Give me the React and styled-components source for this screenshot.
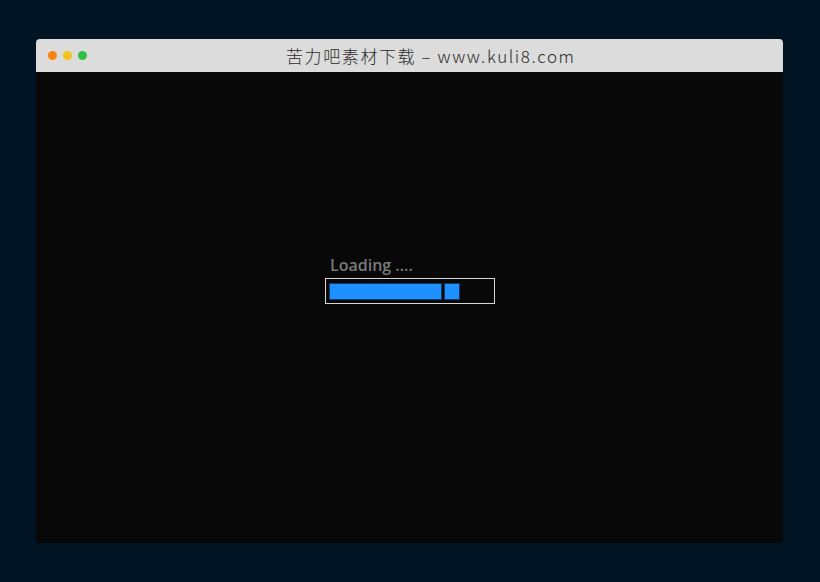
import React from 'react';
import styled, { createGlobalStyle } from 'styled-components';

const GlobalStyle = createGlobalStyle`
    html, body {
        margin: 0;
        padding: 0;
        background: #011424;
        font-family: "Open Sans", "Noto Sans CJK SC", sans-serif;
    }
`;

function App() {
    return (
        <>
            <GlobalStyle />
            <Page>
                <Window>
                    <TitleBar>
                        <Dots>
                            <Dot color="#f6820f" />
                            <Dot color="#f0c419" />
                            <Dot color="#2fc043" />
                        </Dots>
                        <Title>苦力吧素材下载 – www.kuli8.com</Title>
                    </TitleBar>
                    <Content>
                        <Loader>
                            <LoadingText>Loading ....</LoadingText>
                            <Track>
                                <Bar width={113} />
                                <Bar width={16} />
                            </Track>
                        </Loader>
                    </Content>
                </Window>
            </Page>
        </>
    )
}

export default App

const Page = styled.div`
    width: 820px;
    height: 582px;
    box-sizing: border-box;
    padding: 39px 37px 39px 36px;
    display: flex;
`;
const Window = styled.div`
    flex: 1;
    display: flex;
    flex-direction: column;
    border-radius: 4px;
    overflow: hidden;
    background: #080808;
`;
const TitleBar = styled.div`
    height: 33px;
    background: #dcdcdc;
    display: flex;
    align-items: center;
    padding-left: 12px;
`;
const Dots = styled.div`
    display: flex;
    gap: 6px;
    width: 238px;
`;
const Dot = styled.span`
    width: 9px;
    height: 9px;
    border-radius: 50%;
    background: ${p => p.color};
`;
const Title = styled.div`
    font-family: "Noto Sans CJK SC", sans-serif;
    font-size: 17px;
    font-weight: 300;
    letter-spacing: 1.6px;
    color: #2a2a2a;
    white-space: nowrap;
`;
const Content = styled.div`
    flex: 1;
    display: flex;
    padding: 183px 0 0 289px;
`;
const Loader = styled.div`
    display: flex;
    flex-direction: column;
`;
const LoadingText = styled.div`
    font-family: "Open Sans", sans-serif;
    font-size: 16px;
    font-weight: 600;
    color: #7a7a7a;
    line-height: 20px;
    padding-left: 5px;
    margin-bottom: 3px;
`;
const Track = styled.div`
    width: 170px;
    height: 26px;
    box-sizing: border-box;
    border: 1px solid #d8d8d8;
    display: flex;
    align-items: center;
    gap: 2px;
    padding: 0 3px;
`;
const Bar = styled.div`
    width: ${p => p.width}px;
    height: 17px;
    box-sizing: border-box;
    background: #1e90ff;
    border: 1px solid #0d3a66;
`;
